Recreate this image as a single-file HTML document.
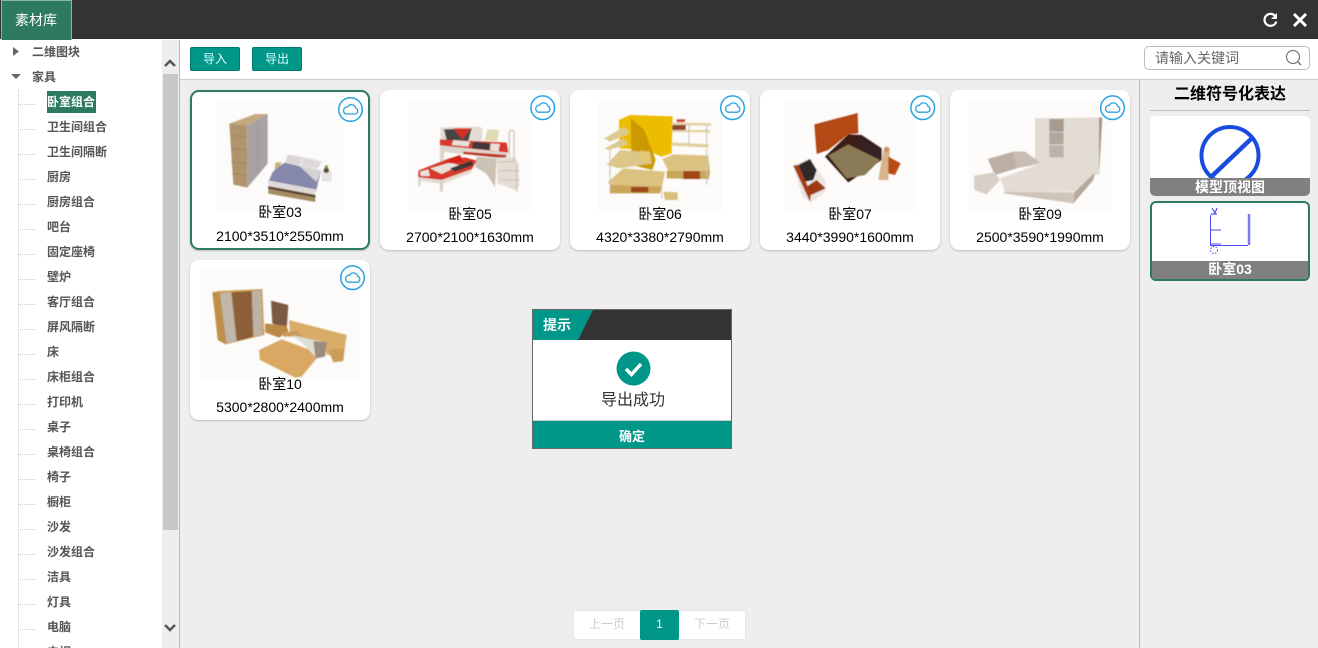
<!DOCTYPE html>
<html><head><meta charset="utf-8"><style>
*{box-sizing:border-box}
html,body{margin:0;padding:0;width:1318px;height:648px;overflow:hidden;background:#eee;font-family:"Liberation Sans","WenQuanYi Zen Hei","Noto Sans CJK SC",sans-serif}
.a{position:absolute}
#root{position:absolute;left:0;top:0;width:1318px;height:648px;overflow:hidden;background:#eee}
.card{position:absolute;width:180px;height:160px;background:#fff;border-radius:9px;box-shadow:0 1px 2px #bbb}
.card.sel{border:2px solid #2e7a5e}
.lb{position:absolute;left:0;width:100%;text-align:center;font-size:14px;color:#000;white-space:nowrap;line-height:20px}
.img{position:absolute;background:#fcfbfa}
.t{position:absolute;left:47px;font-size:12px;font-weight:bold;color:#555;line-height:22px;height:22px;white-space:nowrap}
.h{position:absolute;left:18px;width:17px;border-top:1px dotted #ccc}
</style></head><body><div id="root">
<div class="a" style="left:0;top:0;width:1318px;height:39px;background:#333"></div>
<div class="a" style="left:0;top:39px;width:1318px;height:1px;background:#fff"></div>
<div class="a" style="left:1px;top:0;width:71px;height:40px;background:#2e7a5e;border:1px solid #8fb5a5;border-bottom:0;color:#fff;font-size:14px;line-height:39px;padding-left:13px">素材库</div>

<div class="a" style="left:0;top:40px;width:162px;height:608px;background:#fff"></div>
<div class="a" style="left:162px;top:40px;width:17px;height:608px;background:#eee"></div>
<div class="a" style="left:163px;top:74px;width:15px;height:456px;background:#c8c8c8"></div>
<div class="a" style="left:179px;top:40px;width:1px;height:608px;background:#bbb"></div>
<div class="a" style="left:180px;top:40px;width:1138px;height:39px;background:#fff"></div>
<div class="a" style="left:180px;top:79px;width:1138px;height:1px;background:#ccc"></div>
<div class="a" style="left:1139px;top:80px;width:1px;height:568px;background:#bbb"></div>

<div class="a" style="left:18px;top:90px;height:558px;border-left:1px dotted #ccc"></div>
<div class="t" style="left:32px;top:41px">二维图块</div>
<div class="t" style="left:32px;top:66px">家具</div>
<div class="a" style="left:47px;top:91px;width:49px;height:22px;background:#2e7a5e"></div>
<div class="t" style="top:91px;color:#fff">卧室组合</div>
<div class="t" style="top:116px">卫生间组合</div>
<div class="t" style="top:141px">卫生间隔断</div>
<div class="t" style="top:166px">厨房</div>
<div class="t" style="top:191px">厨房组合</div>
<div class="t" style="top:216px">吧台</div>
<div class="t" style="top:241px">固定座椅</div>
<div class="t" style="top:266px">壁炉</div>
<div class="t" style="top:291px">客厅组合</div>
<div class="t" style="top:316px">屏风隔断</div>
<div class="t" style="top:341px">床</div>
<div class="t" style="top:366px">床柜组合</div>
<div class="t" style="top:391px">打印机</div>
<div class="t" style="top:416px">桌子</div>
<div class="t" style="top:441px">桌椅组合</div>
<div class="t" style="top:466px">椅子</div>
<div class="t" style="top:491px">橱柜</div>
<div class="t" style="top:516px">沙发</div>
<div class="t" style="top:541px">沙发组合</div>
<div class="t" style="top:566px">洁具</div>
<div class="t" style="top:591px">灯具</div>
<div class="t" style="top:616px">电脑</div>
<div class="t" style="top:641px">电视</div>
<div class="h" style="top:104px"></div><div class="h" style="top:129px"></div><div class="h" style="top:154px"></div><div class="h" style="top:179px"></div><div class="h" style="top:204px"></div><div class="h" style="top:229px"></div><div class="h" style="top:254px"></div><div class="h" style="top:279px"></div><div class="h" style="top:304px"></div><div class="h" style="top:329px"></div><div class="h" style="top:354px"></div><div class="h" style="top:379px"></div><div class="h" style="top:404px"></div><div class="h" style="top:429px"></div><div class="h" style="top:454px"></div><div class="h" style="top:479px"></div><div class="h" style="top:504px"></div><div class="h" style="top:529px"></div><div class="h" style="top:554px"></div><div class="h" style="top:579px"></div><div class="h" style="top:604px"></div><div class="h" style="top:629px"></div>

<div class="a" style="left:190px;top:47px;width:50px;height:24px;background:#009688;border:1px solid #00796b;border-radius:2px;color:#dff;font-size:12px;line-height:23px;text-align:center">导入</div>
<div class="a" style="left:252px;top:47px;width:50px;height:24px;background:#009688;border:1px solid #00796b;border-radius:2px;color:#dff;font-size:12px;line-height:23px;text-align:center">导出</div>
<div class="a" style="left:1144px;top:46px;width:166px;height:24px;background:#fff;border:1px solid #bbb;border-radius:5px;color:#666;font-size:14px;line-height:23px;padding-left:10px">请输入关键词</div>

<div class="card sel" style="left:190px;top:90px"><div class="img" style="left:24px;top:10px;width:128px;height:110px"></div><div class="lb" style="top:110px">卧室03</div><div class="lb" style="top:134px;width:176px">2100*3510*2550mm</div></div>
<div class="card" style="left:380px;top:90px"><div class="img" style="left:29px;top:10px;width:122px;height:110px"></div><div class="lb" style="top:114px">卧室05</div><div class="lb" style="top:137px">2700*2100*1630mm</div></div>
<div class="card" style="left:570px;top:90px"><div class="img" style="left:28px;top:10px;width:124px;height:110px"></div><div class="lb" style="top:114px">卧室06</div><div class="lb" style="top:137px">4320*3380*2790mm</div></div>
<div class="card" style="left:760px;top:90px"><div class="img" style="left:25px;top:10px;width:130px;height:110px"></div><div class="lb" style="top:114px">卧室07</div><div class="lb" style="top:137px">3440*3990*1600mm</div></div>
<div class="card" style="left:950px;top:90px"><div class="img" style="left:19px;top:10px;width:142px;height:110px"></div><div class="lb" style="top:114px">卧室09</div><div class="lb" style="top:137px">2500*3590*1990mm</div></div>
<div class="card" style="left:190px;top:260px"><div class="img" style="left:10px;top:10px;width:160px;height:110px"></div><div class="lb" style="top:114px">卧室10</div><div class="lb" style="top:137px">5300*2800*2400mm</div></div>

<div class="a" style="left:1139px;top:84px;width:182px;text-align:center;font-size:16px;font-weight:bold;color:#000;line-height:22px;white-space:nowrap">二维符号化表达</div>
<div class="a" style="left:1150px;top:110px;width:160px;height:1px;background:#bbb"></div>
<div class="a" style="left:1150px;top:116px;width:160px;height:80px;background:#fff;border-radius:5px;overflow:hidden"></div>
<div class="a" style="left:1150px;top:201px;width:160px;height:80px;background:#fff;border:2px solid #2e7a5e;border-radius:6px"></div>

<svg class="a" style="left:0;top:0" width="1318" height="648" viewBox="0 0 1318 648">
<defs><filter id="b" x="-5%" y="-5%" width="110%" height="110%"><feGaussianBlur stdDeviation="0.45"/></filter></defs>
<!-- tree arrows -->
<path d="M13 47l6 4.500-6 4.500z" fill="#666"/><path d="M11 74h10l-5 5z" fill="#666"/>
<!-- scroll arrows -->
<path d="M165 66l5-5 5 5" fill="none" stroke="#555" stroke-width="2.500"/><path d="M165 625l5 5 5-5" fill="none" stroke="#555" stroke-width="2.500"/>
<!-- top icons -->
<path d="M1275.500 16.500a6 6 0 1 0 .8 5" fill="none" stroke="#fff" stroke-width="2.200"/><path d="M1277 13v6h-6z" fill="#fff"/>
<path d="M1294 14l12 12M1306 14l-12 12" stroke="#fff" stroke-width="3"/>
<circle cx="1293" cy="57" r="6.500" fill="none" stroke="#777" stroke-width="1.200"/><path d="M1298 62l3 3" stroke="#777" stroke-width="1.500"/>

<g filter="url(#b)">
<!-- card 1 -->
<g transform="translate(216,102) scale(.3333)">
<polygon points="40,65 118,36 155,36 92,70" fill="#c4a980"/>
<polygon points="40,65 92,70 94,257 52,248" fill="#b0946c"/>
<polygon points="92,70 155,36 155,185 94,257" fill="#a8a2a2"/>
<path d="M125,55V215" stroke="#948e8e" stroke-width="2"/>
<path d="M42,100L92,105M44,140L93,145M46,180L93,185M49,215L94,220" stroke="#927752" stroke-width="3" opacity=".5"/>
<polygon points="157,250 298,278 298,300 157,275" fill="#a58a62"/>
<polygon points="157,254 298,280 298,286 157,260" fill="#463a2e"/>
<polygon points="215,158 262,165 252,190 208,182" fill="#d9d5d8"/>
<polygon points="262,166 318,178 305,200 255,192" fill="#dcd8dc"/>
<polygon points="178,182 196,180 190,205 176,205" fill="#c9ad82"/>
<polygon points="205,182 250,192 315,205 300,268 157,240 170,210" fill="#8688ab"/>
<polygon points="250,192 315,205 302,240" fill="#d5d2d6"/>
<polygon points="157,235 300,262 298,278 157,252" fill="#dedad9"/>
<rect x="320" y="208" width="24" height="28" fill="#e8e6e6" stroke="#aaa"/><circle cx="331" cy="205" r="8" fill="#5d4a3a"/><circle cx="331" cy="195" r="5" fill="#6a9a50"/>
</g>
<!-- card 2 -->
<g transform="translate(400,100) scale(.3333)">
<polygon points="122,82 240,80 248,88 245,130 122,125" fill="#e2dbd2"/>
<polygon points="132,88 215,85 205,122 140,120" fill="#4a4444"/>
<polygon points="160,85 212,85 188,118" fill="#d92e20"/>
<polygon points="253,122 262,88 297,90 292,125" fill="#e0dcb4"/>
<polygon points="120,118 320,128 325,158 120,136" fill="#d8392c"/>
<polygon points="160,120 210,125 205,140 155,135" fill="#e8e2da"/>
<polygon points="220,125 270,130 268,150 215,145" fill="#3c3a3c"/>
<polygon points="272,130 300,132 295,155 270,150" fill="#e8e2da"/>
<polygon points="120,136 322,158 322,178 120,155" fill="#ded6cc"/>
<polygon points="120,150 132,150 132,195 120,195" fill="#ddd5ca"/>
<polygon points="190,155 318,165 318,175 190,162" fill="#c03020"/>
<polygon points="230,170 290,176 285,262 260,222 225,200" fill="#cbc1b4"/>
<polygon points="290,172 345,172 355,190 358,258 345,270 292,250" fill="#e6ded4"/>
<path d="M295,185H345M295,212H358M298,240H358M328,170V95q7,-8 14,0V190M350,190V275" stroke="#cfc5b8" stroke-width="4" fill="none"/>
<polygon points="55,212 135,180 195,172 230,182 215,208 125,240 55,232" fill="#d8392c"/>
<polygon points="90,205 150,188 180,196 125,222" fill="#e9e2d8"/>
<polygon points="150,205 215,182 220,195 165,215" fill="#3a3838"/>
<polygon points="60,215 85,208 90,228 62,228" fill="#e9e2d8"/>
<polygon points="135,180 180,165 190,185 150,190" fill="#d42418"/>
<polygon points="55,232 125,240 215,208 215,218 128,252 55,242" fill="#e4dbd0"/>
<rect x="55" y="238" width="7" height="20" fill="#d9d0c6"/><rect x="120" y="245" width="9" height="30" fill="#d9d0c6"/>
</g>
<!-- card 3 -->
<g transform="translate(565,85) scale(.3333)">
<polygon points="162,105 195,90 323,94 320,205 290,215 240,195 163,190" fill="#ecbc00"/>
<polygon points="197,100 238,135 272,225 262,255 200,240" fill="#cc9a00"/>
<path d="M118,160L178,125L195,145L135,170ZM120,190L175,160L190,178L130,195Z" fill="#dcc98c"/>
<path d="M320,112L438,115V122L320,120ZM322,135L435,135V142L322,141ZM322,172L430,178V188L322,182Z" fill="#e0d09c"/>
<rect x="322" y="120" width="40" height="15" fill="#8c4a30"/>
<path d="M335,103h25v8h-25z" fill="#c84030"/>
<polygon points="292,222 325,208 430,212 435,258 310,258" fill="#dcc280"/>
<polygon points="305,258 435,258 432,282 305,280" fill="#c9a558"/>
<rect x="355" y="258" width="50" height="24" fill="#9f4618"/>
<polygon points="125,240 165,195 225,200 262,235 165,250" fill="#dcc68a"/>
<polygon points="128,292 175,250 300,260 290,310 150,315" fill="#dcc280"/>
<polygon points="135,300 290,305 285,325 135,325" fill="#c9a558"/>
<rect x="198" y="306" width="52" height="16" fill="#9f4618"/>
<polygon points="225,197 255,200 260,230 228,228" fill="#e4c775"/>
<path d="M135,195V320M372,120V180M425,120V180M425,190V300M290,300V340" stroke="#c8c3b0" stroke-width="3"/>
<polygon points="295,320 338,322 338,345 300,345" fill="#d8bf7c"/>
</g>
<!-- card 4 -->
<g transform="translate(565,85) scale(.3333)">
<polygon points="748,118 878,84 880,145 850,148 790,195 755,207" fill="#b44a18"/>
<polygon points="780,215 850,148 890,150 950,190 950,225 850,292" fill="#3a1b14"/>
<polygon points="790,212 850,178 945,225 900,270 845,280" fill="#8a7a55"/>
<polygon points="880,155 950,195 945,225 880,180" fill="#352028"/>
<polygon points="940,285 955,195 975,190 970,285" fill="#d8b58a"/>
<circle cx="965" cy="193" r="8" fill="#d09060"/>
<polygon points="970,215 1007,235 990,270 970,265" fill="#b84c18"/>
<polygon points="685,240 735,220 782,290 782,320 738,352 712,335" fill="#ebe4e0"/>
<polygon points="700,240 735,222 755,255 745,285 720,290" fill="#2e2a2a"/>
<polygon points="725,305 755,285 782,310 738,330" fill="#9a3a18"/>
<polygon points="685,242 700,240 738,325 735,350" fill="#a23c18"/>
</g>
<!-- card 5 -->
<g transform="translate(945,85) scale(.3333)">
<polygon points="270,100 470,97 462,270 270,240" fill="#e3dcd5"/>
<rect x="313" y="102" width="43" height="38" fill="#a79a8f"/><rect x="313" y="142" width="43" height="36" fill="#b3a79c"/><rect x="313" y="181" width="43" height="36" fill="#bdb2a8"/>
<polygon points="462,97 472,97 462,272" fill="#a4988d"/>
<polygon points="128,222 205,200 240,200 265,230 215,250 150,270" fill="#bcafa3"/>
<polygon points="240,200 285,232 265,240 215,250 205,202" fill="#c9bdb3"/>
<polygon points="87,272 150,262 165,285 125,328 88,315" fill="#d8cfc6"/>
<polygon points="165,280 275,240 450,262 390,320 180,320" fill="#e4dcd4"/>
<polygon points="180,320 390,322 385,355 175,325" fill="#cfc4b8"/>
<polygon points="390,320 450,262 445,285 385,355" fill="#b5a99c"/>
</g>
<!-- card 6 -->
<g transform="translate(185,255) scale(.3333)">
<polygon points="82,112 100,108 232,102 238,240 122,268 98,255" fill="#cf9d58"/>
<polygon points="82,112 105,115 125,268 100,256" fill="#c08e4c"/>
<polygon points="105,116 138,112 155,258 125,266" fill="#c0b6aa"/>
<polygon points="140,112 200,108 205,245 155,258" fill="#8c5f38"/>
<polygon points="200,108 228,106 232,240 205,245" fill="#bdb2a6"/>
<polygon points="258,137 310,150 305,225 262,205" fill="#7a5a42"/>
<polygon points="240,205 305,212 310,230 282,248 240,232" fill="#bb8a48"/>
<polygon points="312,195 485,240 475,310 430,300 315,240" fill="#d9ac68"/>
<polygon points="292,232 335,228 352,245 295,245" fill="#c99a58"/>
<polygon points="222,285 290,253 390,290 395,310 350,365 330,368 225,315" fill="#d9a863"/>
<polygon points="320,240 420,262 425,300 395,310 350,262" fill="#e0dcd6"/>
<polygon points="385,258 425,262 420,305 392,310" fill="#9a8d80"/>
<polygon points="430,285 478,280 475,318 445,322" fill="#cc9c58"/>
</g>
</g>

<!-- cloud buttons -->
<g fill="none" stroke="#27a3e3">
<g transform="translate(350.500,109.500)"><circle r="11.800" stroke-width="1.500"/><path d="M-4.500 4.500h9a3 3 0 0 0 .8-5.800a4.500 4.500 0 0 0-8.300-1.200a3.600 3.600 0 0 0-1.500 7z" stroke-width="1.300"/></g>
<g transform="translate(542.700,107.700)"><circle r="11.800" stroke-width="1.500"/><path d="M-4.500 4.500h9a3 3 0 0 0 .8-5.800a4.500 4.500 0 0 0-8.300-1.200a3.600 3.600 0 0 0-1.500 7z" stroke-width="1.300"/></g>
<g transform="translate(732.500,107.700)"><circle r="11.800" stroke-width="1.500"/><path d="M-4.500 4.500h9a3 3 0 0 0 .8-5.800a4.500 4.500 0 0 0-8.300-1.200a3.600 3.600 0 0 0-1.500 7z" stroke-width="1.300"/></g>
<g transform="translate(922.700,107.700)"><circle r="11.800" stroke-width="1.500"/><path d="M-4.500 4.500h9a3 3 0 0 0 .8-5.800a4.500 4.500 0 0 0-8.300-1.200a3.600 3.600 0 0 0-1.500 7z" stroke-width="1.300"/></g>
<g transform="translate(1112.500,107.700)"><circle r="11.800" stroke-width="1.500"/><path d="M-4.500 4.500h9a3 3 0 0 0 .8-5.800a4.500 4.500 0 0 0-8.300-1.200a3.600 3.600 0 0 0-1.500 7z" stroke-width="1.300"/></g>
<g transform="translate(352.500,277.700)"><circle r="11.800" stroke-width="1.500"/><path d="M-4.500 4.500h9a3 3 0 0 0 .8-5.800a4.500 4.500 0 0 0-8.300-1.200a3.600 3.600 0 0 0-1.500 7z" stroke-width="1.300"/></g>
</g>

<!-- no-symbol -->
<circle cx="1230" cy="155.500" r="28.500" fill="none" stroke="#1a4be0" stroke-width="4"/>
<path d="M1211 177L1251 139" stroke="#1a4be0" stroke-width="4.500"/>
<!-- plan symbol -->
<g fill="none" stroke="#4a4af0">
<path d="M1210.500 215V245.500H1248" stroke-width="1"/>
<path d="M1249 214V245" stroke="#7a7af5" stroke-width="2.500"/>
<path d="M1211 230H1221M1211 244H1221" stroke-width="1"/>
<path d="M1212 208l3 5 2-5M1211 214h6" stroke-width="1.200"/>
<circle cx="1214" cy="250" r="3.500" stroke-dasharray="1.500 1.500"/>
</g>
</svg>

<div class="a" style="left:1150px;top:178px;width:160px;height:18px;background:#808080;border-radius:0 0 5px 5px;color:#fff;font-size:14px;font-weight:bold;line-height:18px;text-align:center">模型顶视图</div>
<div class="a" style="left:1152px;top:261px;width:156px;height:18px;background:#808080;border-radius:0 0 4px 4px;color:#fff;font-size:14px;font-weight:bold;line-height:16px;text-align:center">卧室03</div>

<!-- dialog -->
<div class="a" style="left:532px;top:309px;width:200px;height:140px;background:#fff;border:1px solid #666"></div>
<div class="a" style="left:533px;top:310px;width:198px;height:30px;background:#333"></div>
<svg class="a" style="left:533px;top:310px" width="198" height="30"><polygon points="0,0 60,0 45,30 0,30" fill="#009688"/></svg>
<div class="a" style="left:543px;top:310px;color:#fff;font-size:14px;font-weight:bold;line-height:30px">提示</div>
<svg class="a" style="left:616px;top:351px" width="35" height="35"><circle cx="17.500" cy="17.500" r="17" fill="#009688"/><path d="M10 18l5.500 5.500L25 13" fill="none" stroke="#fff" stroke-width="3.500"/></svg>
<div class="a" style="left:533px;top:391px;width:200px;text-align:center;color:#333;font-size:16px;line-height:20px">导出成功</div>
<div class="a" style="left:533px;top:420px;width:198px;height:1px;background:#ccc"></div>
<div class="a" style="left:533px;top:421px;width:198px;height:27px;background:#009688;color:#fff;font-size:13px;font-weight:bold;line-height:31px;text-align:center">确定</div>

<!-- pagination -->
<div class="a" style="left:573px;top:610px;width:173px;height:30px;background:#fff;border:1px solid #e6e6e6;border-radius:2px"></div>
<div class="a" style="left:574px;top:611px;width:66px;height:28px;color:#ccc;font-size:12px;line-height:27px;text-align:center">上一页</div>
<div class="a" style="left:640px;top:610px;width:39px;height:30px;background:#009688;border-radius:2px;color:#fff;font-size:12px;line-height:29px;text-align:center">1</div>
<div class="a" style="left:679px;top:611px;width:66px;height:28px;color:#ccc;font-size:12px;line-height:27px;text-align:center">下一页</div>
</div></body></html>
